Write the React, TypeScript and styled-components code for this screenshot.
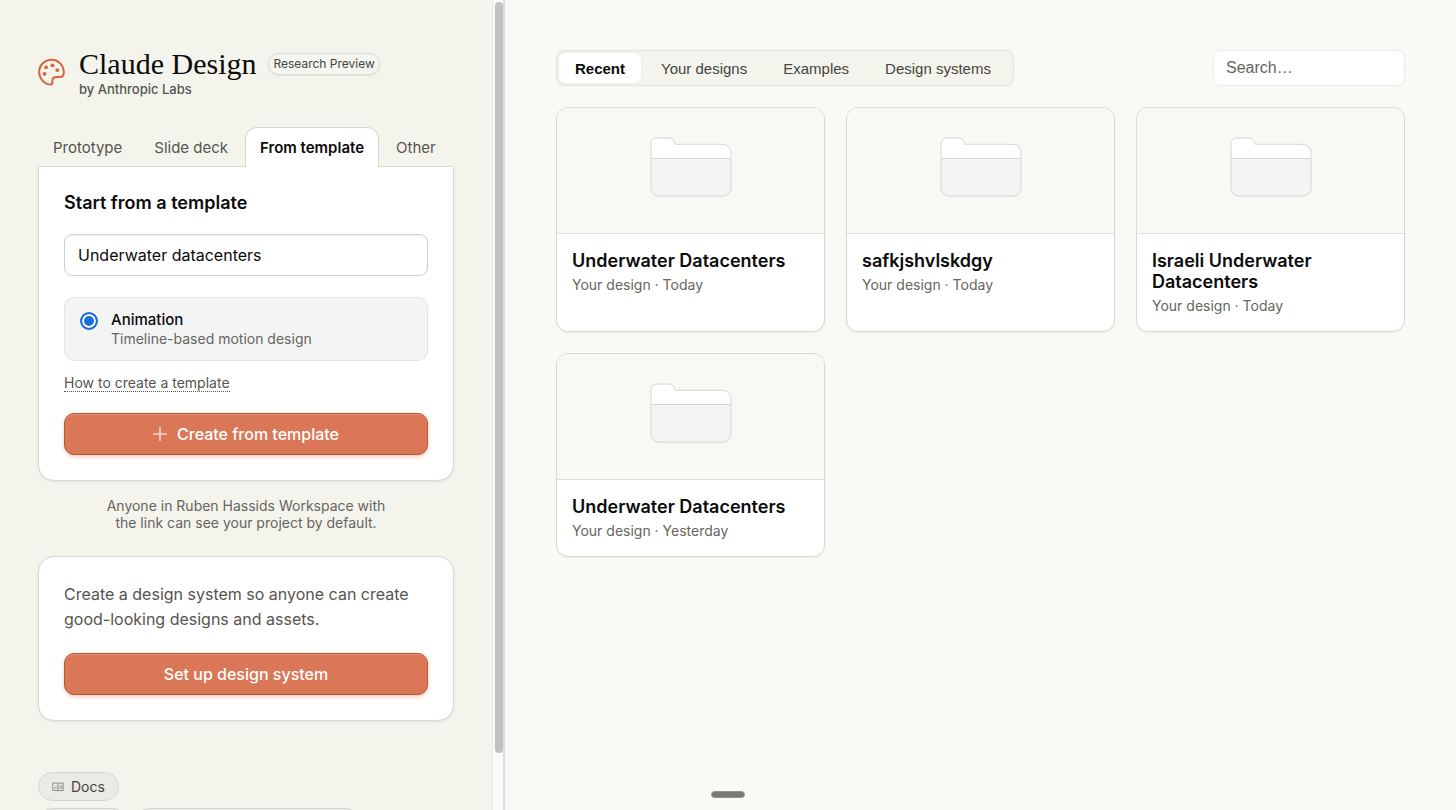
import React from "react";
import styled, { createGlobalStyle, css } from "styled-components";

const sans = `Inter, "Liberation Sans", sans-serif`;
const arial = `"Liberation Sans", Arial, sans-serif`;

const GlobalStyle = createGlobalStyle`
  *, *::before, *::after { box-sizing: border-box; }
  body { margin: 0; background: #faf9f5; color: #0b0b0b; font-family: ${sans}; }
  h1, h2, h3, p { margin: 0; }
  button, input { font: inherit; color: inherit; }
`;

const Shell = styled.div`
  display: flex;
  height: 100vh;
  overflow: hidden;
`;

const Sidebar = styled.aside`
  flex: 0 0 492px;
  padding: 46px 38px 0;
  background: #f4f4ec;
  overflow-y: auto;
  scrollbar-width: none;
`;

const Rail = styled.div`
  flex: none;
  padding: 2px 0 0 2px;
  background: #fafafa;
  border-left: 1px solid #e8e8e6;
  border-right: 2px solid #dededc;
`;

const Thumb = styled.div`
  width: 8px;
  height: 93%;
  border-radius: 4px;
  background: #c1c1c1;
`;

const Header = styled.header`
  display: flex;
  align-items: center;
  gap: 14px;
`;

const TitleRow = styled.div`
  display: flex;
  align-items: center;
  gap: 12px;
`;

const Title = styled.h1`
  font: 400 30px/36px "Liberation Serif", serif;
`;

const Badge = styled.span`
  padding: 0 4px;
  border: 1px solid #dcdcd6;
  border-radius: 11px;
  background: #f6f6f0;
  box-shadow: 0 1px 2px rgba(0, 0, 0, 0.08);
  color: #45443f;
  font-size: 12px;
  line-height: 20px;
`;

const Byline = styled.p`
  color: #55544f;
  font-size: 13px;
  font-weight: 500;
  line-height: 15px;
`;

const Tabs = styled.div`
  display: flex;
  margin-top: 30px;
`;

const Tab = styled.button<{ $active?: boolean }>`
  height: 40px;
  padding: 0 14px;
  margin-bottom: -1px;
  border: 1px solid transparent;
  border-bottom: 0;
  border-radius: 12px 12px 0 0;
  background: none;
  color: #55544f;
  font-size: 15px;
  white-space: nowrap;
  & + & {
    margin-left: 2px;
  }
  ${(p) =>
    p.$active &&
    css`
      z-index: 1;
      border-color: #d6d6d4;
      background: #fff;
      color: #0b0b0b;
      font-weight: 600;
    `}
`;

const Panel = styled.section<{ $tabbed?: boolean }>`
  padding: 25px;
  border: 1px solid #d6d6d4;
  border-radius: ${(p) => (p.$tabbed ? "0 0 16px 16px" : "16px")};
  background: #fff;
  box-shadow: 0 1px 3px rgba(0, 0, 0, 0.08);
`;

const PanelTitle = styled.h2`
  font-size: 18px;
  font-weight: 600;
  line-height: 22px;
`;

const NameInput = styled.input`
  display: block;
  width: 100%;
  height: 42px;
  margin-top: 20px;
  padding: 0 13px;
  border: 1px solid #d0d0d0;
  border-radius: 8px;
  background: #fff;
  box-shadow: inset 0 1px 2px rgba(0, 0, 0, 0.05);
  font-size: 16px;
`;

const Option = styled.label`
  display: flex;
  gap: 13px;
  height: 64px;
  margin-top: 21px;
  padding: 12px 15px;
  border: 1px solid #e4e4e4;
  border-radius: 10px;
  background: #f4f4f4;
`;

const Radio = styled.input`
  appearance: none;
  width: 18px;
  height: 18px;
  margin: 2px 0 0;
  border: 2px solid #1a6fd8;
  border-radius: 50%;
  background: #1a6fd8;
  box-shadow: inset 0 0 0 2px #fff;
`;

const OptionText = styled.span`
  display: flex;
  flex-direction: column;
`;

const OptionName = styled.span`
  font-size: 15px;
  font-weight: 500;
  line-height: 19px;
`;

const OptionHint = styled.span`
  color: #66655f;
  font-size: 14px;
  line-height: 19px;
`;

const HelpLink = styled.a`
  display: inline-block;
  margin-top: 14px;
  border-bottom: 1px dotted #55544f;
  color: #55544f;
  font-size: 14px;
  line-height: 16px;
  text-decoration: none;
`;

const PrimaryButton = styled.button`
  display: flex;
  align-items: center;
  justify-content: center;
  gap: 10px;
  width: 100%;
  height: 42px;
  margin-top: 21px;
  border: 1px solid #b95632;
  border-radius: 10px;
  background: #d97757;
  box-shadow: inset 0 1px 0 rgba(255, 255, 255, 0.22), 0 2px 4px rgba(217, 119, 87, 0.35);
  color: #fff;
  font-size: 16px;
  font-weight: 500;
`;

const Note = styled.p`
  width: 290px;
  margin: 16px auto 25px;
  color: #66655f;
  font-size: 14px;
  line-height: 17px;
  text-align: center;
`;

const Pitch = styled.p`
  color: #55544f;
  font-size: 16px;
  line-height: 25px;
`;

const Pills = styled.nav`
  display: flex;
  flex-wrap: wrap;
  gap: 7px 8px;
  margin-top: 51px;
`;

const PillRow = styled.div`
  display: flex;
  gap: 8px;
  width: 100%;
`;

const pill = css`
  height: 29px;
  border: 1px solid #d6d6d0;
  border-radius: 15px;
  background: #ebebe5;
`;

const Pill = styled.a`
  ${pill}
  display: flex;
  align-items: center;
  gap: 7px;
  padding: 0 13px;
  color: #45443f;
  font-size: 14px;
  text-decoration: none;
`;

const BlankPill = styled.span<{ $wide?: boolean }>`
  ${pill}
  width: ${(p) => (p.$wide ? "225px" : "89px")};
`;

const Main = styled.main`
  flex: 1;
  min-width: 0;
  padding: 50px 51px;
  background: #faf9f5;
  overflow-y: auto;
  scrollbar-width: none;
`;

const Toolbar = styled.div`
  display: flex;
  justify-content: space-between;
  margin-bottom: 21px;
  font-family: ${arial};
`;

const Segments = styled.div`
  display: flex;
  height: 36px;
  gap: 4px;
  padding: 2px 6px 2px 2px;
  border: 1px solid #e2e2d8;
  border-radius: 8px;
  background: #f4f4ec;
  font-size: 15px;
`;

const Segment = styled.button<{ $active?: boolean }>`
  padding: 0 16px;
  border: 0;
  border-radius: 6px;
  background: ${(p) => (p.$active ? "#fff" : "none")};
  box-shadow: ${(p) => (p.$active ? "0 0 2px rgba(0, 0, 0, 0.1)" : "none")};
  color: ${(p) => (p.$active ? "#0b0b0b" : "#45443f")};
  font-weight: ${(p) => (p.$active ? 700 : 400)};
  white-space: nowrap;
`;

const Search = styled.input`
  width: 192px;
  height: 36px;
  padding: 0 12px;
  border: 1px solid #ebebe8;
  border-radius: 8px;
  background: #fff;
  font-size: 16px;
  &::placeholder {
    color: #66655f;
    opacity: 1;
  }
`;

const Grid = styled.div`
  display: grid;
  grid-template-columns: repeat(auto-fill, minmax(260px, 1fr));
  gap: 21px;
`;

const Card = styled.article`
  border: 1px solid #d8d8d6;
  border-radius: 12px;
  background: #fff;
  box-shadow: 0 1px 2px rgba(0, 0, 0, 0.05);
  overflow: hidden;
`;

const Preview = styled.div`
  display: flex;
  justify-content: center;
  height: 126px;
  padding-top: 29px;
  border-bottom: 1px solid #e0e0dc;
  background: #f9f8f4;
`;

const CardBody = styled.div`
  padding: 16px 15px;
`;

const CardTitle = styled.h3`
  font-size: 18px;
  font-weight: 600;
  line-height: 21px;
`;

const Meta = styled.p`
  margin-top: 4px;
  color: #66655f;
  font-size: 14px;
  line-height: 19px;
`;

const Handle = styled.div`
  position: fixed;
  bottom: 12px;
  left: 50%;
  width: 34px;
  height: 7px;
  margin-left: -17px;
  border: 1px solid #93928f;
  border-radius: 4px;
  background: #7b7a78;
`;

const PaletteIcon = () => (
  <svg width="27" height="28" viewBox="0 0 27 28" fill="none" aria-hidden="true">
    <path
      d="M13.500 1.700C6.700 1.700 1.200 7.200 1.200 14c0 6.900 5.600 12.500 11.400 12.500 1.200 0 1.700-.6 1.700-1.700v-1.700c0-2.800 1.400-4 4-4h3.400c2.800 0 4.100-1.500 4.100-4.600C25.800 7.300 20.300 1.700 13.500 1.700Z"
      stroke="#dc6038"
      strokeWidth="2"
    />
    <g fill="#dc6038">
      <circle cx="6.500" cy="15.800" r="1.900" />
      <circle cx="8.100" cy="9.300" r="1.900" />
      <circle cx="14.500" cy="7.300" r="1.900" />
      <circle cx="19.300" cy="12.100" r="1.900" />
    </g>
  </svg>
);

const PlusIcon = () => (
  <svg width="14" height="14" viewBox="0 0 14 14" stroke="#fff" aria-hidden="true">
    <path d="M7 .5v13M.5 7h13" strokeWidth="1.100" strokeLinecap="round" />
  </svg>
);

const BookIcon = () => (
  <svg width="12" height="10" viewBox="0 0 12 10" fill="none" stroke="#77766f" aria-hidden="true">
    <path d="M.8 1h4.300L6 1.600 6.900 1h4.300v7.500H6.900L6 9.200l-.9-.7H.8ZM6 1.600v7.400" strokeWidth=".8" />
    <path d="M2.500 5.500v1.500M4 4v3M8 3v4M9.500 3v4" strokeWidth=".6" />
  </svg>
);

const FolderIcon = () => (
  <svg width="82" height="62" viewBox="0 0 82 62" fill="none" aria-hidden="true">
    <path
      d="M1 51V6.500A5.500 5.500 0 0 1 6.500 1H19a5.500 5.500 0 0 1 5.500 5.500.8.800 0 0 0 .8.800H72.500a8.500 8.500 0 0 1 8.500 8.500V51a8 8 0 0 1-8 8H9a8 8 0 0 1-8-8Z"
      fill="#fff"
    />
    <path d="M1 21.500h80V51a8 8 0 0 1-8 8H9a8 8 0 0 1-8-8Z" fill="#f4f4f4" />
    <path d="M8 60h66" stroke="#000" strokeOpacity=".05" />
    <path
      d="M1 51V6.500A5.500 5.500 0 0 1 6.500 1H19a5.500 5.500 0 0 1 5.500 5.500.8.800 0 0 0 .8.800H72.500a8.500 8.500 0 0 1 8.500 8.500V51a8 8 0 0 1-8 8H9a8 8 0 0 1-8-8ZM1 21.500h80"
      stroke="#d5d5d4"
    />
  </svg>
);

const tabs = ["Prototype", "Slide deck", "From template", "Other"];
const segments = ["Recent", "Your designs", "Examples", "Design systems"];
const designs = [
  { id: 1, name: "Underwater Datacenters", when: "Today" },
  { id: 2, name: "safkjshvlskdgy", when: "Today" },
  { id: 3, name: "Israeli Underwater Datacenters", when: "Today" },
  { id: 4, name: "Underwater Datacenters", when: "Yesterday" },
];

export default function App() {
  return (
    <>
      <GlobalStyle />
      <Shell>
        <Sidebar>
          <Header>
            <PaletteIcon />
            <div>
              <TitleRow>
                <Title>Claude Design</Title>
                <Badge>Research Preview</Badge>
              </TitleRow>
              <Byline>by Anthropic Labs</Byline>
            </div>
          </Header>

          <Tabs role="tablist">
            {tabs.map((name) => (
              <Tab key={name} role="tab" $active={name === "From template"} aria-selected={name === "From template"}>
                {name}
              </Tab>
            ))}
          </Tabs>
          <Panel $tabbed>
            <PanelTitle>Start from a template</PanelTitle>
            <NameInput aria-label="Project name" defaultValue="Underwater datacenters" />
            <Option>
              <Radio type="radio" name="template" defaultChecked />
              <OptionText>
                <OptionName>Animation</OptionName>
                <OptionHint>Timeline-based motion design</OptionHint>
              </OptionText>
            </Option>
            <HelpLink href="#templates">How to create a template</HelpLink>
            <PrimaryButton>
              <PlusIcon />
              Create from template
            </PrimaryButton>
          </Panel>
          <Note>Anyone in Ruben Hassids Workspace with the link can see your project by default.</Note>

          <Panel>
            <Pitch>Create a design system so anyone can create good-looking designs and assets.</Pitch>
            <PrimaryButton>Set up design system</PrimaryButton>
          </Panel>

          <Pills>
            <PillRow>
              <Pill href="#docs">
                <BookIcon />
                Docs
              </Pill>
            </PillRow>
            <BlankPill />
            <BlankPill $wide />
          </Pills>
        </Sidebar>
        <Rail>
          <Thumb />
        </Rail>

        <Main>
          <Toolbar>
            <Segments>
              {segments.map((name) => (
                <Segment key={name} $active={name === "Recent"}>
                  {name}
                </Segment>
              ))}
            </Segments>
            <Search type="search" aria-label="Search designs" placeholder="Search…" />
          </Toolbar>
          <Grid>
            {designs.map((d) => (
              <Card key={d.id}>
                <Preview>
                  <FolderIcon />
                </Preview>
                <CardBody>
                  <CardTitle>{d.name}</CardTitle>
                  <Meta>Your design · {d.when}</Meta>
                </CardBody>
              </Card>
            ))}
          </Grid>
        </Main>
      </Shell>
      <Handle />
    </>
  );
}
